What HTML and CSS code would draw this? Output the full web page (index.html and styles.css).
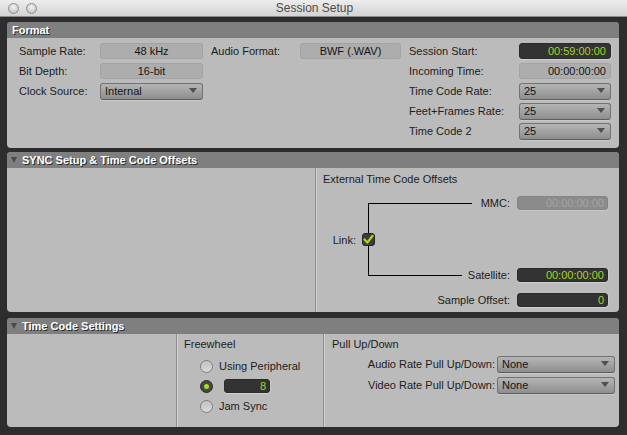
FILE: index.html
```html
<!DOCTYPE html>
<html>
<head>
<meta charset="utf-8">
<title>Session Setup</title>
<link rel="stylesheet" href="styles.css">
</head>
<body>
<div class="window">
  <div class="titlebar">
    <div class="lights"><span class="light"></span><span class="light"></span></div>
    <div class="title">Session Setup</div>
    <div></div>
  </div>
  <div class="content">
    <section class="panel format">
      <div class="phead">Format</div>
      <div class="pbody format-body">
        <div class="fgroup g1">
          <span class="lbl">Sample Rate:</span><span class="field">48 kHz</span>
          <span class="lbl">Bit Depth:</span><span class="field">16-bit</span>
          <span class="lbl">Clock Source:</span><span class="select">Internal</span>
        </div>
        <div class="fgroup g2">
          <span class="lbl">Audio Format:</span><span class="field">BWF (.WAV)</span>
        </div>
        <div class="fgroup g3">
          <span class="lbl">Session Start:</span><span class="tc">00:59:00:00</span>
          <span class="lbl">Incoming Time:</span><span class="field right">00:00:00:00</span>
          <span class="lbl">Time Code Rate:</span><span class="select">25</span>
          <span class="lbl">Feet+Frames Rate:</span><span class="select">25</span>
          <span class="lbl">Time Code 2</span><span class="select">25</span>
        </div>
      </div>
    </section>

    <section class="panel sync">
      <div class="phead"><span class="tri"></span>SYNC Setup &amp; Time Code Offsets</div>
      <div class="pbody sync-body">
        <div class="sync-left"></div>
        <div class="offsets">
          <div class="sect-title">External Time Code Offsets</div>
          <div class="ogrid">
            <div class="bracket"></div>
            <div class="oline r1"><span class="hline"></span><span class="olbl mmc-l">MMC:</span></div>
            <span class="tc small disabled r1c">00:00:00:00</span>
            <div class="link"><span>Link:</span><span class="check"><svg width="11" height="11" viewBox="0 0 11 11"><path d="M1.5 5.5 L4.3 8.6 L9.6 1.8" fill="none" stroke="#a6dc1e" stroke-width="2.2" stroke-linecap="round" stroke-linejoin="round"/></svg></span></div>
            <div class="oline r3"><span class="hline"></span><span class="olbl sat-l">Satellite:</span></div>
            <span class="tc small r3c">00:00:00:00</span>
            <span class="so-label">Sample Offset:</span>
            <span class="tc small r5c">0</span>
          </div>
        </div>
      </div>
    </section>

    <section class="panel tcs">
      <div class="phead"><span class="tri"></span>Time Code Settings</div>
      <div class="pbody tcs-body">
        <div class="tcs-left"></div>
        <div class="freewheel">
          <div class="sect-title">Freewheel</div>
          <div class="radios">
            <div class="radio-row"><span class="radio"></span><span>Using Peripheral</span></div>
            <div class="radio-row"><span class="radio on"></span><span class="tc small fwfield">8</span></div>
            <div class="radio-row"><span class="radio"></span><span>Jam Sync</span></div>
          </div>
        </div>
        <div class="pull">
          <div class="sect-title">Pull Up/Down</div>
          <div class="pull-grid">
            <span class="plbl">Audio Rate Pull Up/Down:</span><span class="select">None</span>
            <span class="plbl">Video Rate Pull Up/Down:</span><span class="select">None</span>
          </div>
        </div>
      </div>
    </section>
  </div>
</div>
</body>
</html>
```

FILE: styles.css
```css
* { box-sizing: border-box; }
html, body { margin: 0; padding: 0; }
body {
  width: 627px;
  height: 435px;
  overflow: hidden;
  background: #2d2d2d;
  font-family: "Liberation Sans", Arial, sans-serif;
  font-size: 11px;
  color: #1c1c1c;
}
.window {
  width: 627px;
  height: 435px;
  display: flex;
  flex-direction: column;
  background: #2d2d2d;
}
.titlebar {
  flex: none;
  height: 17px;
  background: linear-gradient(#ededed, #d3d3d3);
  border-bottom: 1px solid #8c8c8c;
  display: grid;
  grid-template-columns: 1fr auto 1fr;
  align-items: center;
}
.lights { display: flex; gap: 7px; padding-left: 8px; }
.light {
  width: 11px;
  height: 11px;
  border-radius: 50%;
  border: 1px solid #8e8e8e;
  background: radial-gradient(circle at 50% 35%, #f6f6f6, #c6c6c6 75%);
}
.title { font-size: 12px; color: #4c4c4c; line-height: 16px; padding-left: 2px; }

.content {
  flex: 1;
  display: flex;
  flex-direction: column;
  padding: 5px 8px 8px 7px;
}
.panel { background: #bbbbbb; border-radius: 4px; overflow: hidden; }
.format { margin-bottom: 4px; }
.sync { margin-bottom: 6px; }
.phead {
  height: 16px;
  background: #7f7f7f;
  color: #ffffff;
  font-weight: bold;
  line-height: 16px;
  text-shadow: 1px 1px 0 #2c2c2c;
  display: flex;
  align-items: center;
  padding-left: 5px;
}
.tri {
  width: 0;
  height: 0;
  border-left: 3.5px solid transparent;
  border-right: 3.5px solid transparent;
  border-top: 6px solid #4a4a4a;
  margin-left: -1px;
  margin-right: 5px;
}

/* Format */
.format-body {
  height: 110px;
  display: flex;
  align-items: flex-start;
  gap: 8px;
  padding: 5px 0 0 12px;
}
.fgroup {
  display: grid;
  grid-auto-rows: 16px;
  row-gap: 4px;
  align-items: center;
}
.g1 { grid-template-columns: 81px 103px; }
.g2 { grid-template-columns: 89px 101px; }
.g3 { grid-template-columns: 110px 92px; }
.lbl { line-height: 16px; white-space: nowrap; }

.field {
  height: 16px;
  line-height: 14px;
  background: #adadad;
  border: 1px solid #a3a3a3;
  border-radius: 3px;
  text-align: center;
  color: #141414;
}
.field.right { text-align: right; padding-right: 4px; }

.select {
  position: relative;
  height: 17px;
  line-height: 15px;
  padding-left: 4px;
  background: linear-gradient(#b5b5b5, #8e8e8e);
  border: 1px solid #727272;
  border-bottom-color: #5e5e5e;
  border-radius: 3px;
  color: #141414;
  box-shadow: 0 1px 0 #c8c8c8;
}
.select::after {
  content: "";
  position: absolute;
  right: 5px;
  top: 4px;
  border-left: 4px solid transparent;
  border-right: 4px solid transparent;
  border-top: 5px solid #505050;
}

.tc {
  height: 16px;
  line-height: 14px;
  background: #333333;
  border: 1px solid #2a2a2a;
  border-radius: 3px;
  color: #a2d524;
  text-align: right;
  padding-right: 4px;
  box-shadow: 0 1px 0 #d2d2d2, 1px 0 0 #c8c8c8;
}
.tc.small { height: 14px; line-height: 12px; padding-right: 3px; }
.tc.disabled {
  background: #8b8b8b;
  border-color: #858585;
  color: #a3a3a3;
  box-shadow: 0 1px 0 #c8c8c8;
}

/* SYNC */
.sync-body { height: 144px; display: flex; }
.sync-left { width: 308px; flex: none; }
.offsets {
  flex: 1;
  border-left: 1px solid #8f8f8f;
  box-shadow: inset 1px 0 0 #d2d2d2;
  padding: 5px 11px 0 7px;
}
.sect-title { line-height: 13px; }
.ogrid {
  margin-top: 10px;
  display: grid;
  grid-template-columns: 45px 1fr 91px;
  grid-template-rows: 14px 58px 14px 11px 14px;
}
.bracket {
  grid-column: 2;
  grid-row: 1 / 4;
  margin: 7px 0;
  border-left: 1px solid #000;
}
.oline {
  grid-column: 2;
  display: flex;
  align-items: center;
  padding-right: 7px;
  line-height: 14px;
}
.oline.r1 { grid-row: 1; }
.oline.r3 { grid-row: 3; }
.hline { flex: 1; height: 1px; background: #000; }
.mmc-l { margin-left: 9px; }
.sat-l { margin-left: 6px; }
.r1c { grid-column: 3; grid-row: 1; }
.r3c { grid-column: 3; grid-row: 3; }
.r5c { grid-column: 3; grid-row: 5; }
.so-label {
  grid-column: 1 / 3;
  grid-row: 5;
  text-align: right;
  padding-right: 7px;
  line-height: 14px;
}
.link {
  grid-column: 1;
  grid-row: 2;
  justify-self: end;
  align-self: center;
  margin-right: -7px;
  margin-top: 1px;
  display: flex;
  align-items: center;
  gap: 6px;
  position: relative;
  z-index: 1;
}
.check {
  width: 13px;
  height: 13px;
  border-radius: 3px;
  background: #3c3c3c;
  border: 1px solid #262626;
  display: flex;
  align-items: center;
  justify-content: center;
}

/* Time Code Settings */
.tcs-body { height: 93px; display: flex; }
.tcs-left { width: 169px; flex: none; }
.freewheel {
  width: 147px;
  flex: none;
  border-left: 1px solid #8f8f8f;
  box-shadow: inset 1px 0 0 #d2d2d2;
  padding: 4px 0 0 7px;
}
.radios {
  margin-top: 8px;
  padding-left: 16px;
  display: flex;
  flex-direction: column;
  gap: 6px;
}
.radio-row { height: 14px; display: flex; align-items: center; gap: 6px; }
.radio {
  width: 13px;
  height: 13px;
  border-radius: 50%;
  border: 1px solid #808080;
  background: linear-gradient(#c2c2c2, #dadada);
  flex: none;
}
.radio.on {
  background: #474747;
  border-color: #2a2a2a;
  display: flex;
  align-items: center;
  justify-content: center;
}
.radio.on::after {
  content: "";
  width: 5px;
  height: 5px;
  border-radius: 50%;
  background: #a6e01e;
}
.fwfield { width: 46px; margin-left: 5px; }
.pull {
  flex: 1;
  border-left: 1px solid #8f8f8f;
  box-shadow: inset 1px 0 0 #d2d2d2;
  padding: 4px 4px 0 8px;
}
.pull-grid {
  margin-top: 5px;
  display: grid;
  grid-template-columns: 1fr 118px;
  grid-auto-rows: 16px;
  row-gap: 5px;
  column-gap: 2px;
  align-items: center;
}
.plbl { text-align: right; line-height: 16px; white-space: nowrap; }
```
